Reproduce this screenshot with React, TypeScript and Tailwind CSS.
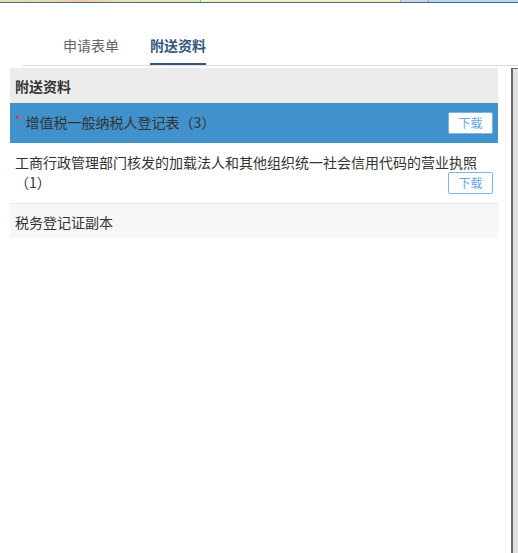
import type { ReactNode } from "react";

const FONT = "font-['Noto_Sans_CJK_SC','Noto_Sans',sans-serif]";

// fullwidth brackets centred in their cell, like the reference font
function Count({ n }: { n: number }) {
  return <span className="font-['Noto_Sans_CJK_TC','Noto_Sans_CJK_SC',sans-serif]">（{n}）</span>;
}

function DownloadButton() {
  return (
    <button
      type="button"
      className="float-right h-[22px] w-[45px] rounded-[2px] border border-[#7ab6ea] bg-white text-[12px] leading-[20px] text-[#6aa6e6]"
    >
      下载
    </button>
  );
}

function Row({
  children,
  className,
}: {
  children: ReactNode;
  className: string;
}) {
  return (
    <div className={`px-[5px] text-[14px] leading-[20px] text-[#333] ${className}`}>
      {children}
    </div>
  );
}

export default function App() {
  return (
    <div className={`flex h-[553px] flex-col overflow-hidden bg-white ${FONT}`}>
      {/* window chrome strip */}
      <div className="flex h-[2px]">
        <div className="w-[200px] bg-[linear-gradient(90deg,#e6e2a4_0%,#efd9a8_25%,#f2c7a0_40%,#eee0a6_60%,#e9eaa8_100%)]" />
        <div className="w-px bg-[#9ab4cc]" />
        <div className="w-[199px] bg-[#f6f0b6]" />
        <div className="w-px bg-[#9ab4cc]" />
        <div className="w-[27px] bg-[#cfd4d8]" />
        <div className="w-px bg-[#8aa4bc]" />
        <div className="flex-1 bg-[#b4d8f2]" />
      </div>
      <div className="h-px bg-[#3d6ca5]" />

      {/* tabs */}
      <div className="ml-[23px] flex gap-[31px] border-b border-[#dddddd] pl-[40px] pt-[32px]">
        <div className="border-b-2 border-transparent pb-[8px] text-[14px] leading-[20px] text-[#666]">
          申请表单
        </div>
        <div className="border-b-2 border-[#34567c] pb-[8px] text-[14px] font-bold leading-[20px] text-[#34567c]">
          附送资料
        </div>
      </div>

      <div className="mt-[2px] flex flex-1">
        {/* attachment list */}
        <div className="ml-[10px] w-[488px]">
          <div className="bg-[#ececec] px-[5px] pb-[7px] pt-[8px] text-[14px] font-bold leading-[20px] text-[#333]">
            附送资料
          </div>
          <Row className="bg-[#4192cc] pb-[11px] pt-[9px]">
            <span className="mr-[5px] align-top text-[12px] leading-[16px] text-[#e8343c]">*</span>
            增值税一般纳税人登记表<Count n={3} />
            <DownloadButton />
          </Row>
          <Row className="border-b border-[#e8e8e8] pb-[11px] pt-[9px]">
            工商行政管理部门核发的加载法人和其他组织统一社会信用代码的营业执照<Count n={1} />
            <DownloadButton />
          </Row>
          <Row className="bg-[#f7f7f7] pb-[6px] pt-[8px]">税务登记证副本</Row>
        </div>

        {/* right edge panel */}
        <div className="ml-auto w-[7px] border-l-2 border-t border-[#6b6b6b] bg-[#e0e0e0]" />
      </div>
    </div>
  );
}
